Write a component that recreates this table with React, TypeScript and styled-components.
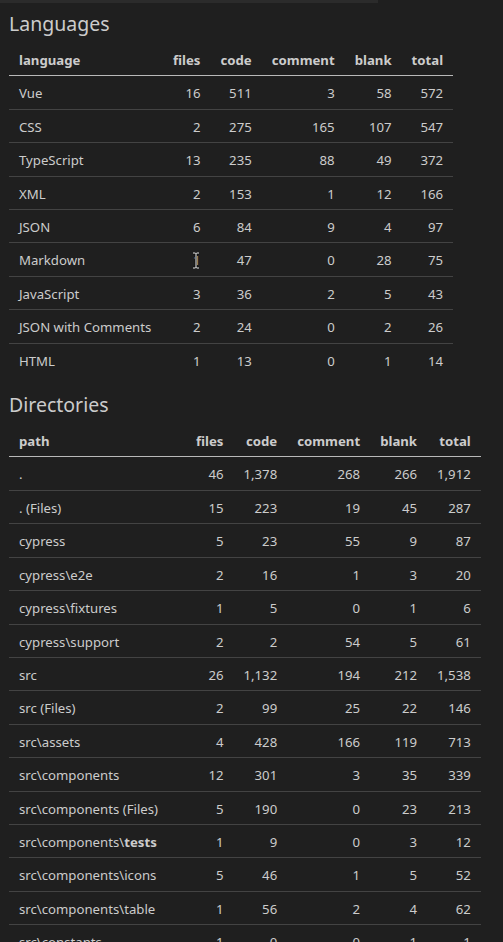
import React from 'react';
import styled, { createGlobalStyle } from 'styled-components';

type Row = [React.ReactNode, number | string, string, number | string, number | string, string];

const languages: Row[] = [
  ['Vue', 16, '511', 3, 58, '572'],
  ['CSS', 2, '275', 165, 107, '547'],
  ['TypeScript', 13, '235', 88, 49, '372'],
  ['XML', 2, '153', 1, 12, '166'],
  ['JSON', 6, '84', 9, 4, '97'],
  ['Markdown', 1, '47', 0, 28, '75'],
  ['JavaScript', 3, '36', 2, 5, '43'],
  ['JSON with Comments', 2, '24', 0, 2, '26'],
  ['HTML', 1, '13', 0, 1, '14'],
];

const directories: Row[] = [
  ['.', 46, '1,378', 268, 266, '1,912'],
  ['. (Files)', 15, '223', 19, 45, '287'],
  ['cypress', 5, '23', 55, 9, '87'],
  ['cypress\\e2e', 2, '16', 1, 3, '20'],
  ['cypress\\fixtures', 1, '5', 0, 1, '6'],
  ['cypress\\support', 2, '2', 54, 5, '61'],
  ['src', 26, '1,132', 194, 212, '1,538'],
  ['src (Files)', 2, '99', 25, 22, '146'],
  ['src\\assets', 4, '428', 166, 119, '713'],
  ['src\\components', 12, '301', 3, 35, '339'],
  ['src\\components (Files)', 5, '190', 0, 23, '213'],
  [
    <>
      src\components\<strong>tests</strong>
    </>,
    1,
    '9',
    0,
    3,
    '12',
  ],
  ['src\\components\\icons', 5, '46', 1, 5, '52'],
  ['src\\components\\table', 1, '56', 2, 4, '62'],
  ['src\\constants', 1, '0', 0, 1, '1'],
];

const GlobalStyle = createGlobalStyle`
  html, body {
    margin: 0;
    background: #1f1f1f;
  }

  body {
    color: #cccccc;
    font-family: "Noto Sans", "Open Sans", sans-serif;
    font-size: 13.2px;
    line-height: 22.4px;
    overflow: hidden;
  }
`;

export default function App() {
  return (
    <>
      <GlobalStyle />
      <Preview>
        <ScrollThumb />
        <Heading>Languages</Heading>
        <StatsTable head="language" rows={languages} firstWidth={134} />
        <Heading $spaced>Directories</Heading>
        <StatsTable head="path" rows={directories} firstWidth={157} />
        <TextCursor width="8" height="17" viewBox="0 0 8 17">
          <path
            d="M1 1h2.5L4 1.6 4.5 1H7M4 1.6v13.8M1 16h2.5L4 15.4l.5.6H7"
            fill="none"
            stroke="#000"
            strokeWidth="2.4"
          />
          <path
            d="M1 1h2.5L4 1.6 4.5 1H7M4 1.6v13.8M1 16h2.5L4 15.4l.5.6H7"
            fill="none"
            stroke="#fff"
            strokeWidth="1"
          />
        </TextCursor>
      </Preview>
    </>
  );
}

interface StatsTableProps {
  head: string;
  rows: Row[];
  firstWidth: number;
}

function StatsTable({ head, rows, firstWidth }: StatsTableProps) {
  return (
    <Table>
      <thead>
        <tr>
          <Th style={{ width: firstWidth }}>{head}</Th>
          <Th $num>files</Th>
          <Th $num>code</Th>
          <Th $num>comment</Th>
          <Th $num>blank</Th>
          <Th $num>total</Th>
        </tr>
      </thead>
      <tbody>
        {rows.map((row, i) => (
          <Tr key={i}>
            {row.map((cell, j) => (
              <Td key={j} $num={j > 0}>
                {cell}
              </Td>
            ))}
          </Tr>
        ))}
      </tbody>
    </Table>
  );
}

const Preview = styled.div`
  position: relative;
  padding: 12px 9px 0;
`;

const ScrollThumb = styled.div`
  position: absolute;
  top: 0;
  left: 0;
  width: 378px;
  height: 3px;
  background: #2b2b2b;
`;

const Heading = styled.h2<{ $spaced?: boolean }>`
  margin: ${(p) => (p.$spaced ? '17px' : '0')} 0 7px 0;
  font-size: 19.5px;
  font-weight: 400;
  line-height: 24px;
  color: #cccccc;
`;

const Table = styled.table`
  border-collapse: collapse;
`;

const Th = styled.th<{ $num?: boolean }>`
  padding: 6px 10px 4px;
  text-align: ${(p) => (p.$num ? 'right' : 'left')};
  font-weight: 700;
  white-space: nowrap;
  border-bottom: 1px solid rgba(255, 255, 255, 0.69);
`;

const Tr = styled.tr`
  & + & {
    border-top: 1px solid rgba(255, 255, 255, 0.16);
  }
`;

const Td = styled.td<{ $num?: boolean }>`
  padding: 6px 10px 4px;
  text-align: ${(p) => (p.$num ? 'right' : 'left')};
  white-space: nowrap;

  strong {
    font-weight: 700;
  }
`;

const TextCursor = styled.svg`
  position: absolute;
  left: 192px;
  top: 252px;
`;
